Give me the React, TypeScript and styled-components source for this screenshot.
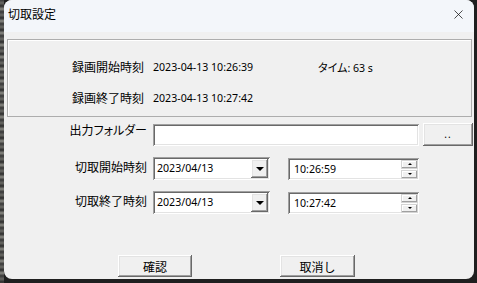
import React from 'react'
import styled, { createGlobalStyle } from 'styled-components'
import { X } from 'lucide-react'

const GlobalStyle = createGlobalStyle`
  html, body {
    margin: 0;
    padding: 0;
    background: #1f1f1f;
  }
  * {
    box-sizing: border-box;
  }
`

const uiFont = `"Noto Sans", "Noto Sans CJK JP", sans-serif`
const jpFont = `"Noto Sans CJK JP", sans-serif`

const sunken = `
  box-shadow: inset 1px 1px #a0a0a0, inset -1px -1px #ffffff,
    inset 2px 2px #696969, inset -2px -2px #e3e3e3;
`

const raised = `
  box-shadow: inset -1px -1px #696969, inset 1px 1px #ffffff,
    inset -2px -2px #a0a0a0, inset 2px 2px #e3e3e3;
`

const Desktop = styled.div`
  width: 477px;
  height: 283px;
  padding: 0 3px 4px 4px;
  background: repeating-linear-gradient(180deg, #3a3a3a 0px, #6a6a66 3px, #2c2c2c 6px, #8a8a84 9px, #333 12px) left / 4px 100% no-repeat,
    #1f1f1f;
`

const Window = styled.div`
  height: 100%;
  display: flex;
  flex-direction: column;
  background: #f0f0f0;
  border-radius: 8px;
  overflow: hidden;
  font-family: ${uiFont};
  color: #000;
`

const TitleBar = styled.div`
  height: 32px;
  flex: none;
  display: flex;
  align-items: flex-start;
  justify-content: space-between;
  padding: 6px 8px 0 4px;
  background: #f3f6fa;
`

const Title = styled.div`
  font-family: ${jpFont};
  font-size: 12px;
  line-height: 16px;
`

const CloseButton = styled.div`
  display: flex;
  padding-top: 1px;
`

const Body = styled.div`
  flex: 1;
  display: flex;
  flex-direction: column;
  padding: 7px 2px 2px 3px;
`

const GroupBox = styled.div`
  height: 78px;
  border: 1px solid #adadad;
  box-shadow: inset 1px 1px #ffffff;
  display: grid;
  grid-template-columns: 136px 156px auto;
  grid-auto-rows: 16px;
  column-gap: 9px;
  row-gap: 15px;
  padding-top: 19px;
  font-size: 10.6px;
  line-height: 16px;
`

const InfoLabel = styled.div`
  font-family: ${jpFont};
  font-size: 12px;
  text-align: right;
`

const InfoValue = styled.div`
  font-family: ${uiFont};
  white-space: nowrap;
`

const Kana = styled.span`
  font-family: ${jpFont};
  font-size: 11px;
  font-feature-settings: 'palt';
`

const Form = styled.div`
  display: grid;
  grid-template-columns: 146px 117px 18px 131px 4px 50px;
  grid-auto-rows: 23px;
  row-gap: 11px;
  margin-top: 6px;
`

const FieldLabel = styled.div<{ $top: number; $palt?: boolean }>`
  grid-column: 1;
  font-family: ${jpFont};
  font-size: 12px;
  line-height: 16px;
  text-align: right;
  padding-right: 6px;
  margin-top: ${({ $top }) => $top}px;
  font-feature-settings: ${({ $palt }) => ($palt ? `'palt'` : 'normal')};
`

const TextBox = styled.div`
  grid-column: 2 / span 3;
  height: 22px;
  margin-top: 1px;
  background: #ffffff;
  ${sunken}
`

const BrowseButton = styled.div`
  grid-column: 6;
  background: #f0f0f0;
  ${raised}
  display: flex;
  align-items: center;
  justify-content: center;
  font-size: 10px;
  letter-spacing: 1px;
  padding-bottom: 2px;
`

const Combo = styled.div`
  grid-column: 2;
  display: flex;
  align-items: center;
  background: #ffffff;
  padding: 2px;
  ${sunken}
`

const FieldText = styled.div`
  flex: 1;
  padding-left: 2px;
  font-family: ${uiFont};
  font-size: 10.6px;
  line-height: 19px;
  white-space: nowrap;
`

const DropButton = styled.div`
  width: 17px;
  height: 19px;
  background: #f0f0f0;
  ${raised}
  display: flex;
  align-items: center;
  justify-content: center;
`

const Arrow = styled.div<{ $up?: boolean; $size: number }>`
  width: 0;
  height: 0;
  border-left: ${({ $size }) => $size}px solid transparent;
  border-right: ${({ $size }) => $size}px solid transparent;
  ${({ $up, $size }) =>
    $up ? `border-bottom: ${$size}px solid #000;` : `border-top: ${$size}px solid #000;`}
`

const TimeBox = styled.div`
  grid-column: 4 / span 1;
  margin-top: 1px;
  display: flex;
  align-items: center;
  background: #ffffff;
  padding: 2px 1px 2px 4px;
  ${sunken}
`

const Spinner = styled.div`
  display: flex;
  flex-direction: column;
  gap: 1px;
  width: 17px;
  height: 19px;
`

const SpinButton = styled.div`
  flex: 1;
  background: #f0f0f0;
  box-shadow: inset -1px -1px #a0a0a0, inset 1px 1px #ffffff;
  border: 1px solid #d4d4d4;
  display: flex;
  align-items: center;
  justify-content: center;
`

const Footer = styled.div`
  margin-top: auto;
  display: flex;
  justify-content: center;
  gap: 88px;
  padding-right: 6px;
`

const DialogButton = styled.div<{ $width: number }>`
  width: ${({ $width }) => $width}px;
  height: 22px;
  background: #f0f0f0;
  ${raised}
  display: flex;
  align-items: center;
  justify-content: center;
  font-family: ${jpFont};
  font-size: 12px;
`

const DateCombo = ({ value }: { value: string }) => (
  <Combo>
    <FieldText>{value}</FieldText>
    <DropButton>
      <Arrow $size={4} />
    </DropButton>
  </Combo>
)

const TimePicker = ({ value }: { value: string }) => (
  <TimeBox>
    <FieldText>{value}</FieldText>
    <Spinner>
      <SpinButton>
        <Arrow $up $size={2} />
      </SpinButton>
      <SpinButton>
        <Arrow $size={2} />
      </SpinButton>
    </Spinner>
  </TimeBox>
)

const App = () => {
  return (
    <Desktop>
      <GlobalStyle />
      <Window>
        <TitleBar>
          <Title>切取設定</Title>
          <CloseButton>
            <X size={15} strokeWidth={1.2} color="#111" />
          </CloseButton>
        </TitleBar>
        <Body>
          <GroupBox>
            <InfoLabel>録画開始時刻</InfoLabel>
            <InfoValue>2023-04-13 10:26:39</InfoValue>
            <InfoValue>
              <Kana>タイム</Kana>: 63 s
            </InfoValue>
            <InfoLabel>録画終了時刻</InfoLabel>
            <InfoValue>2023-04-13 10:27:42</InfoValue>
          </GroupBox>
          <Form>
            <FieldLabel $top={-1} $palt>
              出力フォルダー
            </FieldLabel>
            <TextBox />
            <BrowseButton>..</BrowseButton>

            <FieldLabel $top={2}>切取開始時刻</FieldLabel>
            <DateCombo value="2023/04/13" />
            <TimePicker value="10:26:59" />

            <FieldLabel $top={2}>切取終了時刻</FieldLabel>
            <DateCombo value="2023/04/13" />
            <TimePicker value="10:27:42" />
          </Form>
          <Footer>
            <DialogButton $width={74}>確認</DialogButton>
            <DialogButton $width={75}>取消し</DialogButton>
          </Footer>
        </Body>
      </Window>
    </Desktop>
  )
}

export default App
